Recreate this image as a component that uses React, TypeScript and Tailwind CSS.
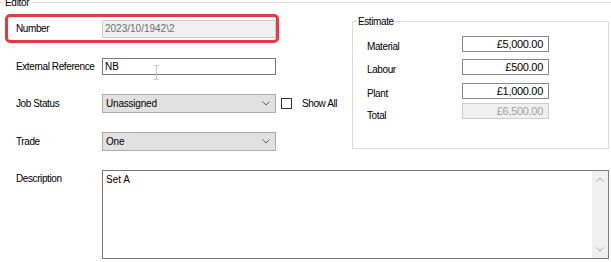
import { ReactNode } from 'react';

type RowProps = {
  label: string;
  children: ReactNode;
  className?: string;
};

function Row({ label, children, className = '' }: RowProps) {
  return (
    <div className={`flex items-center pl-[11px] ${className}`}>
      <span className="w-[86px] tracking-[-0.4px]">{label}</span>
      {children}
    </div>
  );
}

function Chevron() {
  return (
    <svg width="8" height="5" viewBox="0 0 8 5" className="mr-[5px]">
      <path d="M0.5 0.5 L4 4 L7.5 0.5" fill="none" stroke="#606060" strokeWidth="1" />
    </svg>
  );
}

function Select({ value }: { value: string }) {
  return (
    <div className="flex h-[19px] w-[174px] items-center justify-between border border-[#adadad] bg-[#e1e1e1] pl-[3px]">
      <span className="tracking-[-0.2px]">{value}</span>
      <Chevron />
    </div>
  );
}

function MoneyRow({ label, value, disabled = false, className = '', labelOffset = 'mt-[4px]' }: {
  label: string;
  value: string;
  disabled?: boolean;
  className?: string;
  labelOffset?: string;
}) {
  return (
    <div className={`flex h-[16px] items-start overflow-visible pl-[14px] ${className}`}>
      <span className={`w-[95px] shrink-0 leading-[13px] tracking-[-0.4px] ${labelOffset}`}>{label}</span>
      <div
        className={`flex h-[16px] w-[87px] items-center justify-end border pr-[5px] text-[11px] tracking-[-0.3px] ${
          disabled ? 'border-[#cccccc] bg-[#f0f0f0] text-[#a0a0a0]' : 'border-[#8a8a8a] bg-white text-black'
        }`}
      >
        {value}
      </div>
    </div>
  );
}

export default function App() {
  return (
    <div className="h-[262px] w-[611px] overflow-hidden bg-white font-['Liberation_Sans',Arial,sans-serif] text-[10px] leading-[13px] text-black">
      <fieldset className="-mt-[4px] border-0 border-t border-[#dcdcdc]">
        <legend className="ml-[3px] px-[2px] tracking-[-0.3px]">Editor</legend>

        <div className="mt-[5px] flex">
          {/* left column */}
          <div className="ml-[5px] w-[347px]">
            <div className="flex h-[29px] w-[274px] items-center rounded-[5px] border-[3px] border-[#e63a3f] pl-[8px]">
              <span className="w-[86px] tracking-[-0.4px]">Number</span>
              <div className="flex h-[18px] w-[174px] items-center border border-[#cccccc] bg-[#f0f0f0] pl-[2px] text-[#6d6d6d]">
                2023/10/1942\2
              </div>
            </div>

            <Row label="External Reference" className="mt-[15px] h-[17px]">
              <div className="relative flex h-[17px] w-[174px] items-center border border-[#7a7a7a] bg-white pl-[2px]">
                NB
                <svg width="7" height="15" viewBox="0 0 7 15" className="absolute left-[50px] top-[6px]">
                  <path d="M1 0.5 H6 M3.5 0.5 V14.5 M1 14.5 H6" fill="none" stroke="#c8c8c8" strokeWidth="1" />
                </svg>
              </div>
            </Row>

            <Row label="Job Status" className="mt-[19px] h-[19px]">
              <Select value="Unassigned" />
              <div className="ml-[5px] h-[11px] w-[11px] border border-[#333333] bg-white" />
              <span className="ml-[10px] tracking-[-0.4px]">Show All</span>
            </Row>

            <Row label="Trade" className="mt-[19px] h-[19px]">
              <Select value="One" />
            </Row>
          </div>

          {/* estimate group */}
          <fieldset className="mt-[1px] h-[134px] w-[257px] border border-[#dcdcdc]">
            <legend className="ml-[4px] px-[1px] tracking-[-0.4px]">Estimate</legend>
            <MoneyRow label="Material" value="£5,000.00" className="mt-[8px]" />
            <MoneyRow label="Labour" value="£500.00" className="mt-[7px]" />
            <MoneyRow label="Plant" value="£1,000.00" className="mt-[8px]" />
            <MoneyRow label="Total" value="£6,500.00" disabled className="mt-[4px]" labelOffset="mt-[6px]" />
          </fieldset>
        </div>

        <div className="mt-[19px] flex items-start pl-[16px]">
          <span className="mt-[2px] w-[86px] tracking-[-0.4px]">Description</span>
          <div className="flex h-[89px] w-[507px] border border-[#7a7a7a] bg-white">
            <div className="flex-1 pl-[3px] pt-[2px]">Set A</div>
            <div className="flex w-[16px] flex-col items-center justify-between bg-[#f0f0f0] py-[6px]">
              <svg width="8" height="5" viewBox="0 0 8 5">
                <path d="M0.5 4.5 L4 1 L7.5 4.5" fill="none" stroke="#a3a3a3" strokeWidth="1" />
              </svg>
              <svg width="8" height="5" viewBox="0 0 8 5">
                <path d="M0.5 0.5 L4 4 L7.5 0.5" fill="none" stroke="#a3a3a3" strokeWidth="1" />
              </svg>
            </div>
          </div>
        </div>
      </fieldset>
    </div>
  );
}
